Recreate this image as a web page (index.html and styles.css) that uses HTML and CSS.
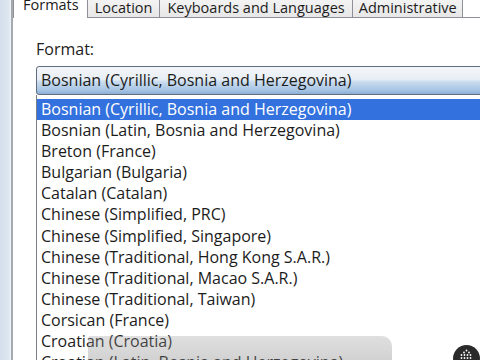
FILE: index.html
```html
<!DOCTYPE html>
<html>
<head>
<meta charset="utf-8">
<link rel="stylesheet" href="styles.css">
</head>
<body>
<div class="screen">
  <div class="frame"></div>
  <div class="dialog">
    <div class="tabs">
      <div class="tab selected">Formats</div>
      <div class="tab">Location</div>
      <div class="tab">Keyboards and Languages</div>
      <div class="tab">Administrative</div>
    </div>
    <div class="panel">
      <div class="label">Format:</div>
      <div class="combo">Bosnian (Cyrillic, Bosnia and Herzegovina)</div>
      <ul class="list">
        <li class="sel">Bosnian (Cyrillic, Bosnia and Herzegovina)</li>
        <li>Bosnian (Latin, Bosnia and Herzegovina)</li>
        <li>Breton (France)</li>
        <li>Bulgarian (Bulgaria)</li>
        <li>Catalan (Catalan)</li>
        <li>Chinese (Simplified, PRC)</li>
        <li>Chinese (Simplified, Singapore)</li>
        <li>Chinese (Traditional, Hong Kong S.A.R.)</li>
        <li>Chinese (Traditional, Macao S.A.R.)</li>
        <li>Chinese (Traditional, Taiwan)</li>
        <li>Corsican (France)</li>
        <li>Croatian (Croatia)</li>
        <li>Croatian (Latin, Bosnia and Herzegovina)</li>
      </ul>
    </div>
  </div>
</div>
<div class="player-bar"></div>
<svg class="player-btn" width="27" height="27" viewBox="0 0 27 27">
  <circle cx="13.5" cy="13.5" r="13.5" fill="#2a2a2a"/>
  <g fill="#ffffff">
    <circle cx="13.5" cy="5.5" r="0.9"/>
    <circle cx="11" cy="7.5" r="0.9"/>
    <circle cx="16" cy="7.5" r="0.9"/>
    <circle cx="8.5" cy="10" r="0.9"/>
    <circle cx="11.5" cy="10" r="0.9"/>
    <circle cx="14.5" cy="10" r="0.9"/>
    <circle cx="17.5" cy="10" r="0.9"/>
    <circle cx="8.5" cy="13" r="0.9"/>
    <circle cx="11.5" cy="13" r="0.9"/>
    <circle cx="14.5" cy="13" r="0.9"/>
    <circle cx="17.5" cy="13" r="0.9"/>
  </g>
</svg>
</body>
</html>
```

FILE: styles.css
```css
html, body {
  margin: 0;
  width: 480px;
  height: 360px;
  overflow: hidden;
  background: #ffffff;
  font-family: "Open Sans", "Noto Sans", sans-serif;
  font-size: 16px;
  color: #1c1c1c;
}

.screen {
  display: flex;
  height: 360px;
  overflow: hidden;
}

.frame {
  flex: none;
  width: 11px;
  background: linear-gradient(to right, #d3dfeb, #dce6f0 75%, #eef3f8);
  border-right: 2px solid #a6aaaf;
}

.dialog {
  flex: 1;
  min-width: 0;
  display: flex;
  flex-direction: column;
}

.tabs {
  flex: none;
  display: flex;
  align-items: flex-end;
  height: 17px;
  border-bottom: 1px solid #8d9096;
  font-size: 14.5px;
}

.tab {
  flex: none;
  height: 18px;
  line-height: 18px;
  padding: 0 7px;
  margin-left: -1px;
  border: 1px solid #8d9096;
  border-bottom: 0;
  background: linear-gradient(#f4f4f4, #e7e7e7);
  white-space: nowrap;
}

.tab:last-child {
  padding: 0 5px 0 6px;
}

.tab.selected {
  margin-left: 0;
  padding: 0 8px 4px 9px;
  margin-bottom: -1px;
  background: #ffffff;
  position: relative;
  z-index: 1;
}

.panel {
  flex: 1;
  padding: 21px 0 0 23px;
}

.label {
  line-height: 21px;
  margin-bottom: 6px;
}

.combo {
  box-sizing: border-box;
  height: 29px;
  line-height: 27px;
  margin-right: -8px;
  padding-left: 4px;
  border: 1px solid #5f6d7e;
  border-radius: 3px;
  background: linear-gradient(#f3f6f9 0%, #e8eef5 45%, #cadcee 55%, #a7c5e4 85%, #8aafd6 100%);
  white-space: nowrap;
}

.list {
  list-style: none;
  margin: 0;
  padding: 4px 0 0;
  border-left: 1px solid #7a7f86;
  height: 270px;
}

.list li {
  line-height: 21.1px;
  height: 21.1px;
  padding-left: 4px;
  white-space: nowrap;
}

.list li.sel {
  background: #3371de;
  color: #ffffff;
}

.player-bar {
  position: absolute;
  left: 88px;
  top: 336px;
  width: 304px;
  height: 24px;
  border-radius: 3px 10px 0 0;
  background: linear-gradient(rgba(150, 150, 150, 0.3), rgba(130, 130, 130, 0.36));
}

.player-btn {
  position: absolute;
  left: 453px;
  top: 345px;
}
```
